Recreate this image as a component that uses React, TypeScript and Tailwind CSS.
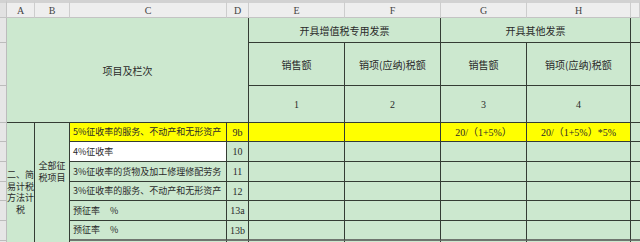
import React from 'react';

type Row = {
  item: string;
  no: string;
  fill?: 'yellow' | 'white';
  g?: string;
  h?: string;
};

const rows: Row[] = [
  { item: '5%征收率的服务、不动产和无形资产', no: '9b', fill: 'yellow', g: '20/（1+5%）', h: '20/（1+5%）*5%' },
  { item: '4%征收率', no: '10', fill: 'white' },
  { item: '3%征收率的货物及加工修理修配劳务', no: '11' },
  { item: '3%征收率的服务、不动产和无形资产', no: '12' },
  { item: '预征率     %', no: '13a' },
  { item: '预征率     %', no: '13b' },
  { item: '', no: '' },
];

const letters = ['A', 'B', 'C', 'D', 'E', 'F', 'G', 'H', ''];

const rowHead = 'bg-[#e6e6e6] border-r border-b border-[#bcbcbc]';
const green = 'bg-[#cce8cf]';
const line = 'border-[#343c34]';

export default function App() {
  return (
    <div className="w-[640px] h-[242px] overflow-hidden bg-white text-[#2a2a2a] font-['Liberation_Serif','Noto_Sans_CJK_SC',serif]">
      <div className="grid grid-cols-[7px_28px_35px_157px_22px_96px_96px_86px_104px_9px] grid-rows-[18px_25px_43px_37px_19px_20px_20px_19px_20px_20px_20px]">
        {/* column letters */}
        <div className="bg-[#e2e2e2] border-t-[3px] border-t-[#d2d2d2] border-r border-b border-[#c4c4c4]" />
        {letters.map((l, i) => (
          <div
            key={i}
            className="flex items-center justify-center bg-[#eeeeee] border-t-[3px] border-t-[#d2d2d2] border-r border-b border-r-[#cdcdcd] border-b-[#c4c4c4] text-[10px] text-[#444]"
          >
            {l}
          </div>
        ))}

        {/* header row 1 */}
        <div className={rowHead} />
        <div className={`col-span-4 row-span-3 flex items-center justify-center ${green} border-r border-b ${line} text-[10px] font-['Noto_Sans_CJK_SC',sans-serif]`}>
          项目及栏次
        </div>
        <div className={`col-span-2 flex items-center justify-center ${green} border-r border-b ${line} text-[10px] font-['Noto_Sans_CJK_SC',sans-serif]`}>
          开具增值税专用发票
        </div>
        <div className={`col-span-2 flex items-center justify-center ${green} border-r border-b ${line} text-[10px] font-['Noto_Sans_CJK_SC',sans-serif]`}>
          开具其他发票
        </div>
        <div className={`${green} border-b ${line}`} />

        {/* header row 2 */}
        <div className={rowHead} />
        {['销售额', '销项(应纳)税额', '销售额', '销项(应纳)税额'].map((t, i) => (
          <div key={i} className={`flex items-center justify-center ${green} border-r border-b ${line} text-[10px] font-['Noto_Sans_CJK_SC',sans-serif]`}>
            {t}
          </div>
        ))}
        <div className={`${green} border-b ${line}`} />

        {/* header row 3 */}
        <div className={rowHead} />
        {['1', '2', '3', '4'].map((t) => (
          <div key={t} className={`flex items-center justify-center ${green} border-r border-b ${line} text-[10px]`}>
            {t}
          </div>
        ))}
        <div className={`${green} border-b ${line}`} />

        {/* data rows */}
        {rows.map((r, i) => {
          const fill = r.fill === 'yellow' ? 'bg-[#ffff00]' : green;
          const bottom = i === 5 ? 'border-b-2 border-b-[#6f766f]' : 'border-b';
          return (
            <React.Fragment key={i}>
              <div className={rowHead} />
              {i === 0 && (
                <div className={`row-span-7 flex flex-col items-center justify-center ${green} border-r ${line} whitespace-nowrap text-[9px] leading-[11.5px] font-['Noto_Sans_CJK_SC',sans-serif]`}>
                  <span>二、简</span>
                  <span>易计税</span>
                  <span>方法计</span>
                  <span>税</span>
                </div>
              )}
              {i === 0 && (
                <div className={`row-span-5 flex flex-col items-center justify-center ${green} border-r ${line} whitespace-nowrap text-[9px] leading-[12px] font-['Noto_Sans_CJK_SC',sans-serif]`}>
                  <span>全部征</span>
                  <span>税项目</span>
                </div>
              )}
              {i >= 5 && <div className={`${green} border-r ${line}`} />}
              <div
                className={`flex items-center pl-[3px] whitespace-pre border-r ${bottom} ${line} text-[9px] font-['Noto_Sans_CJK_SC',sans-serif] ${
                  r.fill === 'white' ? 'bg-white' : fill
                }`}
              >
                {r.item}
              </div>
              <div className={`flex items-center justify-center ${fill} border-r ${bottom} ${line} text-[10px]`}>
                {r.no}
              </div>
              <div className={`${fill} border-r ${bottom} ${line}`} />
              <div className={`${fill} border-r ${bottom} ${line}`} />
              <div className={`flex items-center justify-center ${fill} border-r ${bottom} ${line} text-[10px]`}>
                {r.g}
              </div>
              <div className={`flex items-center justify-center ${fill} border-r ${bottom} ${line} text-[10px]`}>
                {r.h}
              </div>
              <div className={`${green} ${bottom} ${line}`} />
            </React.Fragment>
          );
        })}
      </div>
    </div>
  );
}
